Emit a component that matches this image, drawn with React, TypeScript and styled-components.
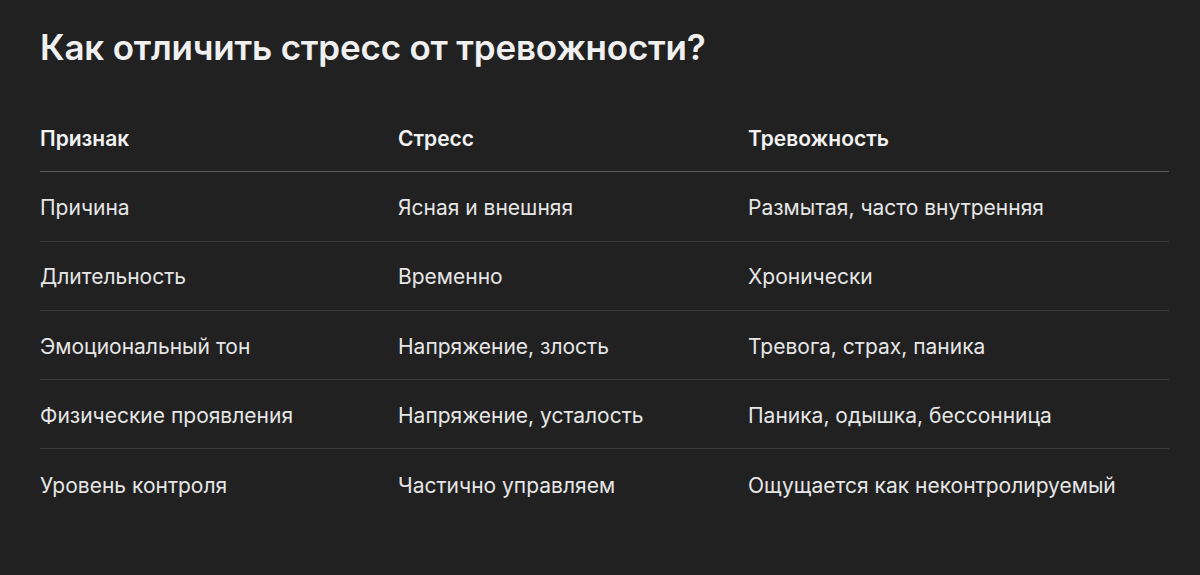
import styled, { createGlobalStyle } from 'styled-components';

interface IRow {
  sign: string;
  stress: string;
  anxiety: string;
}

const ROWS: IRow[] = [
  { sign: 'Причина', stress: 'Ясная и внешняя', anxiety: 'Размытая, часто внутренняя' },
  { sign: 'Длительность', stress: 'Временно', anxiety: 'Хронически' },
  { sign: 'Эмоциональный тон', stress: 'Напряжение, злость', anxiety: 'Тревога, страх, паника' },
  { sign: 'Физические проявления', stress: 'Напряжение, усталость', anxiety: 'Паника, одышка, бессонница' },
  { sign: 'Уровень контроля', stress: 'Частично управляем', anxiety: 'Ощущается как неконтролируемый' }
];

const GlobalStyle = createGlobalStyle`
  html, body {
    margin: 0;
    background: #212121;
  }
  body {
    font-family: Inter, "Noto Sans", sans-serif;
    color: #ececec;
  }
`;

const ScPage = styled.main`
  width: 1200px;
  height: 575px;
  box-sizing: border-box;
  padding: 24px 31px 0 40px;
  background: #212121;
`;

const ScTitle = styled.h1`
  margin: 0;
  font-size: 35px;
  line-height: 46px;
  font-weight: 600;
  color: #f0f0f0;
  letter-spacing: -0.2px;
`;

const ScTable = styled.div`
  margin-top: 33px;
  display: grid;
  grid-template-columns: 358px 350px 1fr;
`;

const ScRow = styled.div<{ $head?: boolean; $last?: boolean }>`
  display: contents;

  & > div {
    box-sizing: border-box;
    height: 69.3px;
    padding-top: 2px;
    display: flex;
    align-items: center;
    font-size: 21px;
    font-weight: ${p => p.$head ? 600 : 400};
    color: ${p => p.$head ? '#f2f2f2' : '#e6e6e6'};
    border-bottom: ${p => p.$last ? 'none' : p.$head ? '1.5px solid #5c5c5c' : '1px solid #3b3b3b'};
  }
`;

const ScCell = styled.div``;

export default function App() {
  return <>
    <GlobalStyle />
    <ScPage>
      <ScTitle>Как отличить стресс от тревожности?</ScTitle>
      <ScTable>
        <ScRow $head>
          <ScCell>Признак</ScCell>
          <ScCell>Стресс</ScCell>
          <ScCell>Тревожность</ScCell>
        </ScRow>
        {ROWS.map((row, idx) => <ScRow key={idx} $last={idx === ROWS.length - 1}>
          <ScCell>{row.sign}</ScCell>
          <ScCell>{row.stress}</ScCell>
          <ScCell>{row.anxiety}</ScCell>
        </ScRow>)}
      </ScTable>
    </ScPage>
  </>;
}
